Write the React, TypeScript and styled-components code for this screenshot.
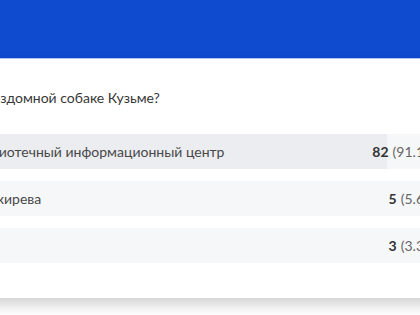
import React from "react";
import styled, { createGlobalStyle } from "styled-components";

const GlobalStyle = createGlobalStyle`
  body {
    margin: 0;
    background: #ffffff;
    font-family: "Lato", "Open Sans", sans-serif;
    overflow: hidden;
  }
`;

const Page = styled.div`
  width: 420px;
  height: 315px;
  overflow: hidden;
`;

const Header = styled.div`
  height: 58px;
  background: #0e4bcf;
  border-bottom: 1px solid #b7cbf3;
`;

const Card = styled.div`
  margin-left: -66px;
  width: 505px;
  padding: 0 16px 35px;
  background: #ffffff;
  box-shadow: 0 6px 14px rgba(0, 0, 0, 0.2);
`;

const Question = styled.div`
  padding-top: 29px;
  margin-left: -131px;
  font-size: 14px;
  line-height: 20px;
  color: #383838;
  white-space: nowrap;
`;

const List = styled.div`
  display: grid;
  gap: 12px;
  margin-top: 26px;
`;

const Row = styled.div`
  height: 35px;
  display: flex;
  align-items: center;
  justify-content: space-between;
  padding: 0 16px;
  font-size: 14px;
  color: #484848;
  white-space: nowrap;
`;

const Stats = styled.span`
  color: #666;
`;

const Count = styled.b`
  color: #333;
  font-weight: 700;
  margin-right: 4px;
`;

const FILL_SCALE = 0.95;

const options = [
  { label: "Библиотечный информационный центр", count: 82, pct: 91.1 },
  { label: "Балакирева", count: 5, pct: 5.6 },
  { label: "Парк", count: 3, pct: 3.3 },
];

export default function App() {
  return (
    <Page>
      <GlobalStyle />
      <Header />
      <Card>
        <Question>Где установить памятник бездомной собаке Кузьме?</Question>
        <List>
          {options.map((o, i) => {
            const stop = o.pct * FILL_SCALE;
            return (
              <Row
                key={i}
                style={{
                  background: `linear-gradient(to right, #ebedf1 ${stop}%, #f6f7f9 ${stop}%)`,
                }}
              >
                <span>{o.label}</span>
                <Stats>
                  <Count>{o.count}</Count>({o.pct}%)
                </Stats>
              </Row>
            );
          })}
        </List>
      </Card>
    </Page>
  );
}
